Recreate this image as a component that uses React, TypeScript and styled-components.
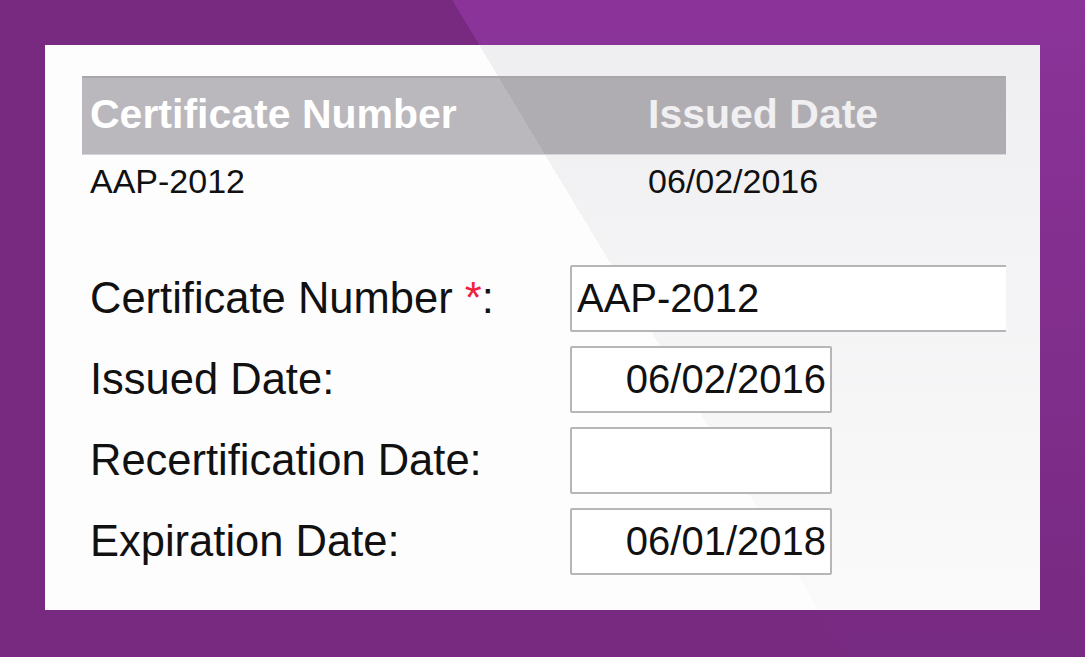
import styled, { createGlobalStyle } from 'styled-components';

// diagonal split shared by every layer: fixed attachment keeps the edge aligned
const SPLIT = 'linear-gradient(59deg, var(--left) 726px, transparent 726px)';
const FADE = 'linear-gradient(180deg, var(--right-top), var(--right-bottom))';

const GlobalStyle = createGlobalStyle`
  html, body {
    margin: 0;
    padding: 0;
  }

  body {
    --left: #782a80;
    --right-top: #8b3399;
    --right-bottom: #772a81;
    background: ${SPLIT}, ${FADE};
    background-attachment: fixed, fixed;
    font-family: 'Liberation Sans', Arial, sans-serif;
    color: #111;
  }
`;

const Page = styled.div`
  box-sizing: border-box;
  height: 657px;
  padding: 45px;
`;

const Card = styled.section`
  --left: #fefdfe;
  --right-top: #eeedef;
  --right-bottom: #fcfbfc;
  box-sizing: border-box;
  width: 995px;
  height: 565px;
  padding: 31px 34px 34px 37px;
  background: ${SPLIT}, ${FADE};
  background-attachment: fixed, fixed;
  overflow: hidden;
`;

const Table = styled.div`
  display: grid;
  grid-template-columns: 558px 1fr;
`;

const HeaderRow = styled.div`
  --left: #bab8bd;
  --right-top: #b0adb2;
  --right-bottom: #b0adb2;
  grid-column: 1 / -1;
  display: grid;
  grid-template-columns: subgrid;
  align-items: center;
  box-sizing: border-box;
  height: 79px;
  border-top: 2px solid #a9a7ac;
  border-bottom: 1px solid #d6d4d8;
  background: ${SPLIT}, ${FADE};
  background-attachment: fixed, fixed;
`;

const HeaderCell = styled.div<{ $tint?: boolean }>`
  padding: 0 8px 3px;
  font-size: 41px;
  font-weight: 700;
  color: ${(p) => (p.$tint ? '#f0eff1' : '#ffffff')};
  white-space: nowrap;
`;

const DataCell = styled.div`
  padding: 7px 8px 0;
  font-size: 34px;
  line-height: 39px;
  white-space: nowrap;
`;

const Form = styled.div`
  display: flex;
  flex-direction: column;
  gap: 14px;
  margin-top: 64px;
  overflow: hidden;
`;

const FormRow = styled.div`
  display: grid;
  grid-template-columns: 488px 1fr;
  align-items: center;
  height: 67px;
`;

const Label = styled.label`
  padding-left: 8px;
  font-size: 43.5px;
  white-space: nowrap;
`;

const Required = styled.span`
  color: #f0203f;
`;

const TextInput = styled.input<{ $wide?: boolean; $right?: boolean }>`
  box-sizing: border-box;
  width: ${(p) => (p.$wide ? '470px' : '262px')};
  height: 67px;
  padding: 0 4px 0 5px;
  border: 2px solid #b6b5b7;
  border-radius: 2px;
  background: #ffffff;
  font-family: 'Liberation Sans', Arial, sans-serif;
  font-size: 40px;
  color: #111;
  text-align: ${(p) => (p.$right ? 'right' : 'left')};
  outline: none;
`;

const fields = [
  { label: 'Issued Date:', value: '06/02/2016' },
  { label: 'Recertification Date:', value: '' },
  { label: 'Expiration Date:', value: '06/01/2018' },
];

export default function App() {
  return (
    <>
      <GlobalStyle />
      <Page>
        <Card>
          <Table>
            <HeaderRow>
              <HeaderCell>Certificate Number</HeaderCell>
              <HeaderCell $tint>Issued Date</HeaderCell>
            </HeaderRow>
            <DataCell>AAP-2012</DataCell>
            <DataCell>06/02/2016</DataCell>
          </Table>

          <Form>
            <FormRow>
              <Label htmlFor="cert-number">
                Certificate Number <Required>*</Required>:
              </Label>
              <TextInput id="cert-number" $wide readOnly defaultValue="AAP-2012" />
            </FormRow>
            {fields.map((f) => (
              <FormRow key={f.label}>
                <Label>{f.label}</Label>
                <TextInput $right readOnly defaultValue={f.value} />
              </FormRow>
            ))}
          </Form>
        </Card>
      </Page>
    </>
  );
}
